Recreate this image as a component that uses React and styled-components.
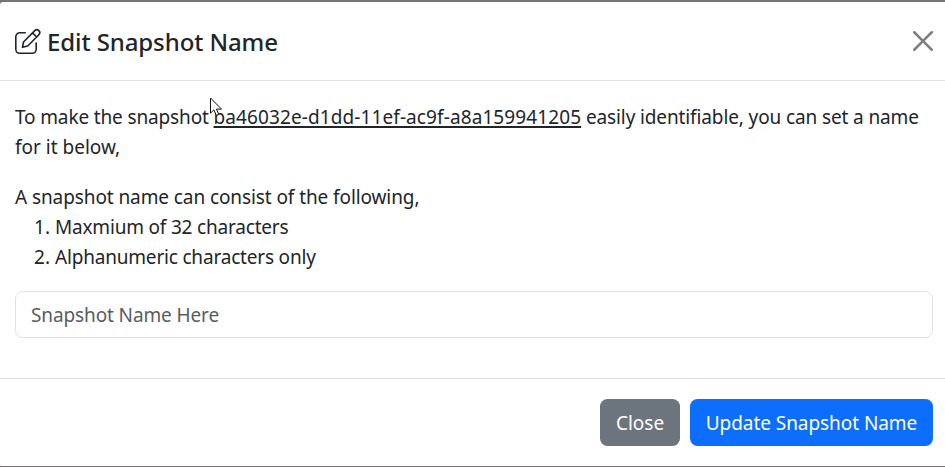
import React from "react";
import styled, { createGlobalStyle } from "styled-components";

const GlobalStyle = createGlobalStyle`
  *, *::before, *::after { box-sizing: border-box; }
  body {
    margin: 0;
    background: #767474;
    color: #212529;
    font-family: "Noto Sans", "Open Sans", sans-serif;
    font-size: 19px;
    line-height: 30px;
  }
`;

const Backdrop = styled.div`
  height: 467px;
  padding: 2px 0 1px;
  overflow: hidden;
`;

const Modal = styled.div`
  display: flex;
  flex-direction: column;
  height: 464px;
  background: #fff;
  border-radius: 3px 0 0 1px;
`;

const Header = styled.header`
  display: flex;
  flex: none;
  align-items: center;
  justify-content: space-between;
  height: 79px;
  padding: 0 12px 0 15px;
  border-bottom: 1px solid #dee2e6;
`;

const Title = styled.h5`
  display: flex;
  align-items: center;
  gap: 7px;
  margin: 0;
  font-size: 24px;
  font-weight: 500;
`;

const EditIcon = styled.svg`
  flex: none;
  overflow: visible;
  fill: none;
  stroke: currentColor;
  stroke-width: 1.6;
  stroke-linecap: round;
  stroke-linejoin: round;
`;

const TitleText = styled.span`
  padding-top: 2px;
  letter-spacing: -0.1px;
`;

const CloseIconButton = styled.button`
  display: flex;
  padding: 0;
  border: 0;
  background: none;
  color: #000;
  opacity: 0.5;
`;

const Body = styled.main`
  flex: 1;
  padding: 21px 12px 0 15px;
`;

const Paragraph = styled.p`
  margin: 0 0 ${(p) => p.$gap || 0}px;
`;

const Text = styled.span`
  letter-spacing: ${(p) => p.$spacing || 0}px;
  white-space: nowrap;
`;

const SnapshotId = styled.span`
  position: relative;
  letter-spacing: 0.1px;
  text-decoration: underline;
  text-decoration-thickness: 2px;
  text-underline-offset: 2px;
  text-decoration-skip-ink: none;
`;

const Pointer = styled.svg`
  position: absolute;
  left: -4px;
  top: -7px;
`;

const Rules = styled.ol`
  margin: 0 0 19px;
  padding-left: 40px;
`;

const NameInput = styled.input`
  display: block;
  width: 100%;
  height: 47px;
  padding: 0 15px;
  border: 1px solid #dee2e6;
  border-radius: 7.5px;
  font: inherit;
  letter-spacing: -0.12px;
  &::placeholder { color: #595c5f; opacity: 1; }
`;

const Footer = styled.footer`
  display: flex;
  flex: none;
  align-items: center;
  justify-content: flex-end;
  gap: 10px;
  height: 88px;
  padding-right: 12px;
  border-top: 1px solid #dee2e6;
`;

const Button = styled.button`
  width: ${(p) => p.$width}px;
  height: 47px;
  padding: 0;
  border: 0;
  border-radius: 7.5px;
  background: ${(p) => (p.$primary ? "#0d6efd" : "#6c757d")};
  color: #fff;
  font: inherit;
  white-space: nowrap;
`;

export default function App() {
  return (
    <Backdrop>
      <GlobalStyle />
      <Modal role="dialog">
        <Header>
          <Title>
            <EditIcon width="25" height="27" viewBox="0 0 25 27">
              <path d="M10.3 4.8H4.8a4 4 0 0 0-4 4v12.5a4 4 0 0 0 4 4h12.4a4 4 0 0 0 4-4V15" />
              <path d="M7.5 19.2 8.5 14 19.8 2.6a2.9 2.9 0 0 1 4.1 4.1L12.7 18zM17.5 4.9l4.1 4.1" />
            </EditIcon>
            <TitleText>Edit Snapshot Name</TitleText>
          </Title>
          <CloseIconButton aria-label="Close">
            <svg width="20" height="20" viewBox="0 0 16 16" fill="currentColor">
              <path d="M.293.293a1 1 0 0 1 1.414 0L8 6.586 14.293.293a1 1 0 1 1 1.414 1.414L9.414 8l6.293 6.293a1 1 0 0 1-1.414 1.414L8 9.414l-6.293 6.293a1 1 0 0 1-1.414-1.414L6.586 8 .293 1.707a1 1 0 0 1 0-1.414z" />
            </svg>
          </CloseIconButton>
        </Header>
        <Body>
          <Paragraph $gap={20}>
            <Text $spacing={-0.14}>To make the snapshot </Text>
            <SnapshotId>
              ba46032e-d1dd-11ef-ac9f-a8a159941205
              <Pointer width="13" height="20" viewBox="0 0 13 20">
                <path d="M.5 1v15.2l3.4-3.3 2.4 5.5 2.5-1.1-2.3-5.2h5z" fill="#fff" stroke="#111" />
              </Pointer>
            </SnapshotId>
            <Text $spacing={-0.12}> easily identifiable, you can set a name</Text>
            <br />
            <Text>for it below,</Text>
          </Paragraph>
          <Paragraph>
            <Text $spacing={-0.09}>A snapshot name can consist of the following,</Text>
          </Paragraph>
          <Rules>
            <li><Text $spacing={-0.19}>Maxmium of 32 characters</Text></li>
            <li><Text $spacing={-0.19}>Alphanumeric characters only</Text></li>
          </Rules>
          <NameInput placeholder="Snapshot Name Here" />
        </Body>
        <Footer>
          <Button $width={80}><Text>Close</Text></Button>
          <Button $width={243} $primary><Text $spacing={-0.06}>Update Snapshot Name</Text></Button>
        </Footer>
      </Modal>
    </Backdrop>
  );
}
